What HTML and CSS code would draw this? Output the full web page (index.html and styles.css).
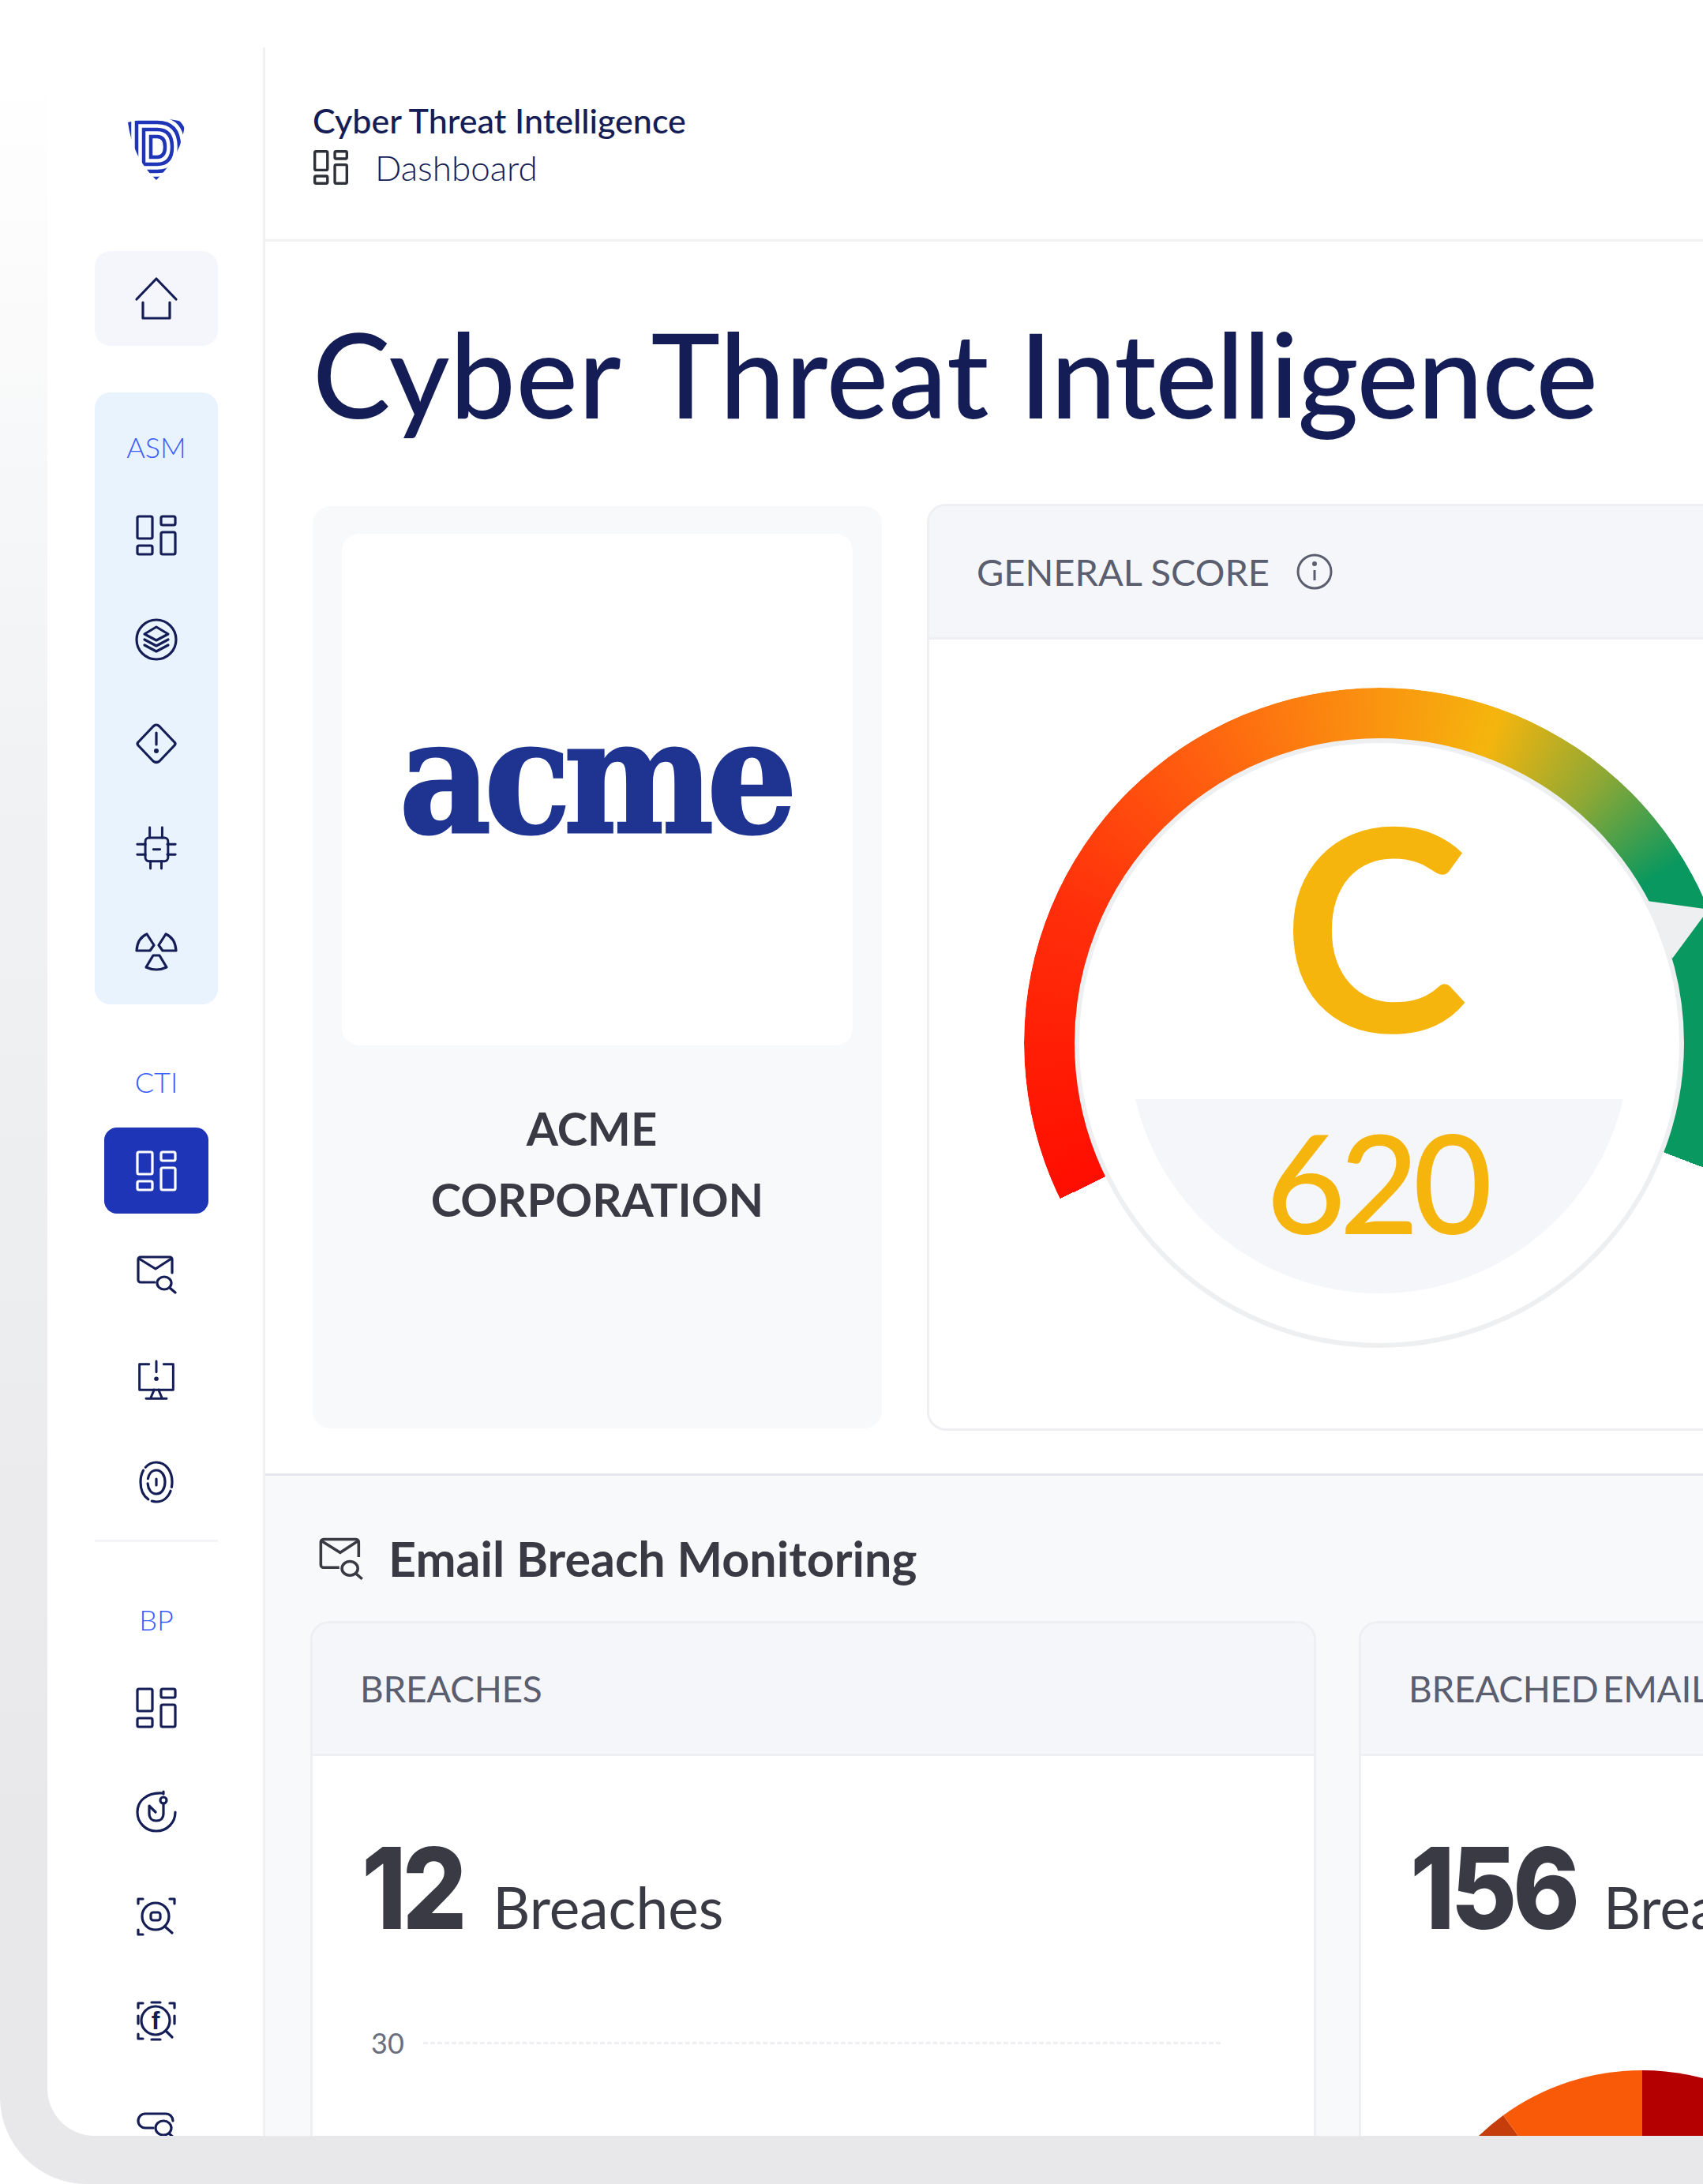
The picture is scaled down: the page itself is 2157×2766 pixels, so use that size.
FILE: index.html
```html
<!DOCTYPE html>
<html lang="en">
<head>
  <meta charset="UTF-8">
  <title>Cyber Threat Intelligence</title>
  <link rel="stylesheet" href="styles.css">
</head>
<body>
  <svg class="sprite" width="0" height="0">
    <symbol id="i-dash" viewBox="0 0 52 52">
      <rect x="2" y="2" width="19" height="28" rx="2"/>
      <rect x="2" y="39" width="19" height="11" rx="2"/>
      <rect x="32" y="2" width="18" height="11" rx="2"/>
      <rect x="32" y="22" width="18" height="28" rx="2"/>
    </symbol>
    <symbol id="i-mail" viewBox="0 0 52 52">
      <path d="M24 37H6a3 3 0 0 1-3-3V8a3 3 0 0 1 3-3h37a3 3 0 0 1 3 3v17"/>
      <path d="M4 7l21 13L45 7"/>
      <ellipse cx="36" cy="38" rx="9" ry="8"/>
      <path d="M43 44l7 6"/>
    </symbol>
  </svg>

  <div class="device">
    <div class="screen">
      <aside class="sidebar">
        <div class="logo">
          <svg width="72" height="78" viewBox="0 0 72 78">
            <defs>
              <clipPath id="shield"><path d="M0 5Q36-5 72 5Q70 44 36 78Q6 50 0 5Z"/></clipPath>
            </defs>
            <g clip-path="url(#shield)" fill="none" stroke="#1f35b7" stroke-width="4.5">
              <path d="M29 23H37Q47 23 47 36Q47 49 37 49H29Z"/>
              <path d="M20 14H37Q56 14 56 36Q56 58 37 58H20Z"/>
              <path d="M11 5H37Q65 5 65 36Q65 67 37 67H11Z"/>
              <path d="M2-4H37Q74-4 74 36Q74 76 37 76H2Z"/>
            </g>
          </svg>
        </div>

        <a class="nav-home">
          <svg class="ico" viewBox="0 0 52 52"><path d="M1 27L26 1l25 26"/><path d="M9 31v20h34V31"/></svg>
        </a>

        <div class="nav-group nav-group-asm">
          <div class="nav-label">ASM</div>
          <a class="nav-item"><svg class="ico"><use href="#i-dash"/></svg></a>
          <a class="nav-item"><svg class="ico" viewBox="0 0 52 52"><ellipse cx="26" cy="26" rx="25" ry="25"/><path d="M11 19l15-9 15 9-15 8z"/><path d="M11 26l15 8 15-8"/><path d="M11 33l15 8 15-8"/></svg></a>
          <a class="nav-item"><svg class="ico" viewBox="0 0 52 52"><path d="M26 2q2 0 4 2l19 20q2 2 0 4L30 48q-4 3-8 0L3 28q-2-2 0-4L22 4q2-2 4-2z"/><path d="M26 12v15"/><circle class="dot" cx="26" cy="35" r="3"/></svg></a>
          <a class="nav-item"><svg class="ico" viewBox="0 0 52 56"><rect x="11" y="14" width="31" height="32" rx="5"/><path d="M17 0v14M34 0v14M18 46v10M33 46v10M0 23h11M0 37h11M41 23h11M41 37h11M22 30h9"/></svg></a>
          <a class="nav-item"><svg class="ico" viewBox="0 0 52 48"><path d="M1 22Q2 6 14 1l9 14-5 7z"/><path d="M51 22Q50 6 38 1l-9 14 5 7z"/><path d="M13 43l9-15h8l9 15q-13 6-26 0z"/></svg></a>
        </div>

        <div class="nav-group nav-group-cti">
          <div class="nav-label">CTI</div>
          <a class="nav-item nav-item-active"><svg class="ico"><use href="#i-dash"/></svg></a>
          <a class="nav-item"><svg class="ico"><use href="#i-mail"/></svg></a>
          <a class="nav-item nav-item-low"><svg class="ico" viewBox="0 0 52 56"><path d="M16 5H3v35h46V5H36"/><path d="M26 1v15"/><circle class="dot" cx="26" cy="25" r="3"/><path d="M23 40l-5 12M29 40l5 12M12 52h28"/></svg></a>
          <a class="nav-item"><svg class="ico" viewBox="0 0 52 52"><path class="dash-ring" d="M26 1C38 1 46 12 46 26S38 51 26 51 6 40 6 26 14 1 26 1z"/><path class="dash-inner" d="M26 11c7 0 11 7 11 15s-4 15-11 15-11-7-11-15 4-15 11-15z"/><path d="M26 22v8"/></svg></a>
        </div>

        <div class="nav-rule"></div>

        <div class="nav-group">
          <div class="nav-label">BP</div>
          <a class="nav-item"><svg class="ico"><use href="#i-dash"/></svg></a>
          <a class="nav-item"><svg class="ico" viewBox="0 0 52 52"><path d="M33 2C14 1 2 12 2 26s11 24 24 24 24-10 24-24"/><path d="M35 0v3"/><circle cx="35" cy="11" r="4"/><path d="M35 15v13c0 6-4 9-9 9s-9-3-9-9V18l8 8"/></svg></a>
          <a class="nav-item"><svg class="ico" viewBox="0 0 52 52"><path d="M3 10V4h6M43 4h6v6M3 43v6h6"/><ellipse cx="25" cy="26" rx="17" ry="17"/><rect x="19" y="21" width="12" height="10" rx="3"/><path d="M37 39l9 8"/></svg></a>
          <a class="nav-item"><svg class="ico" viewBox="0 0 52 52"><path d="M3 10V4h6M43 4h6v6M3 43v6h6M20 3h11M20 50h11M3 20v10M49 20v10"/><ellipse cx="25" cy="26" rx="18" ry="18"/><text class="ico-f" x="25" y="37" text-anchor="middle">f</text><path d="M38 39l8 8"/></svg></a>
          <a class="nav-item"><svg class="ico" viewBox="0 0 52 52"><path d="M22 30H12a9 9 0 0 1 0-18h26a9 9 0 0 1 9 9"/><ellipse cx="35" cy="30" rx="10" ry="9"/><path d="M42 37l8 7"/></svg></a>
        </div>
      </aside>

      <main class="main">
        <header class="topbar">
          <div class="crumb-title">Cyber Threat Intelligence</div>
          <div class="crumb-sub">
            <svg class="crumb-ico"><use href="#i-dash"/></svg>
            <span>Dashboard</span>
          </div>
        </header>

        <section class="overview">
          <h1 class="page-title">Cyber Threat <span class="tight">Intelligence</span></h1>
          <div class="overview-row">
            <div class="company">
              <div class="company-logo"><span class="acme">acme</span></div>
              <div class="company-name">ACME&nbsp;<br>CORPORATION</div>
            </div>
            <div class="panel score">
              <div class="panel-head">
                <span>GENERAL SCORE</span>
                <svg class="info" viewBox="0 0 46 46"><circle cx="23" cy="23" r="21"/><path d="M23 21v13"/><circle class="info-dot" cx="23" cy="13" r="3"/></svg>
              </div>
              <div class="score-body">
                <div class="gauge">
                  <div class="gauge-ring"></div>
                  <svg class="gauge-needle" width="900" height="900" viewBox="0 0 900 900"><path d="M789 270L861 280V289L821 343Q805 305 789 270Z"/></svg>
                  <div class="gauge-face">
                    <div class="gauge-well"></div>
                    <div class="grade">C</div>
                    <div class="points">620</div>
                  </div>
                </div>
              </div>
            </div>
          </div>
        </section>

        <section class="breach">
          <h2 class="breach-title">
            <svg class="breach-ico"><use href="#i-mail"/></svg>
            Email Breach Monitoring
          </h2>
          <div class="breach-row">
            <div class="panel stat">
              <div class="panel-head">BREACHES</div>
              <div class="stat-body">
                <div class="stat-value"><b>12</b><span>Breaches</span></div>
                <div class="axis-row"><span>30</span><i></i></div>
              </div>
            </div>
            <div class="panel stat">
              <div class="panel-head">BREACHED EMAILS</div>
              <div class="stat-body">
                <div class="stat-value stat-value-wide"><b>156</b><span>Breached Emails</span></div>
                <svg class="pie" width="300" height="100" viewBox="0 0 300 100">
                  <path fill="#c43d0a" d="M299 299L123 57A299 299 0 0 0 0 299Z"/>
                  <path fill="#f95a07" d="M299 299V0A299 299 0 0 0 123 57Z"/>
                  <path fill="#b50000" d="M299 299V0A299 299 0 0 1 598 299Z"/>
                </svg>
              </div>
            </div>
          </div>
        </section>
      </main>
    </div>
  </div>
</body>
</html>
```

FILE: styles.css
```css
* {
  box-sizing: border-box;
}
html, body {
  margin: 0;
  padding: 0;
  width: 2157px;
  height: 2766px;
  overflow: hidden;
  background: #fff;
  font-family: "Lato", "Liberation Sans", sans-serif;
  color: #141d55;
}
.sprite {
  position: absolute;
}

/* outer device frame */
.device {
  width: 2157px;
  height: 2766px;
  padding: 60px 0 61px 60px;
  border-bottom-left-radius: 110px;
  background: linear-gradient(180deg, #fff 3%, #f1f2f4 35%, #e8e8ea 85%);
  overflow: hidden;
}
.screen {
  display: flex;
  height: 100%;
  background: #fff;
  border-bottom-left-radius: 60px;
  overflow: hidden;
}

/* sidebar */
.sidebar {
  flex: none;
  width: 276px;
  border-right: 3px solid #f0f1f3;
  padding: 90px 0 0 60px;
}
.logo {
  width: 156px;
  height: 78px;
  display: flex;
  justify-content: center;
}
.nav-home {
  display: flex;
  align-items: center;
  justify-content: center;
  width: 156px;
  height: 120px;
  margin-top: 90px;
  border-radius: 20px;
  background: #f5f6fb;
}
.ico {
  width: 52px;
  height: 52px;
  fill: none;
  stroke: #141d55;
  stroke-width: 3.2;
  stroke-linecap: round;
  stroke-linejoin: round;
  overflow: visible;
}
.ico .dot {
  fill: #141d55;
  stroke: none;
}
.ico-f {
  font-family: "Liberation Sans", sans-serif;
  font-size: 32px;
  font-weight: 700;
  fill: #141d55;
  stroke: none;
}
.dash-ring {
  stroke-dasharray: 42 5 30 5 40 5;
}
.dash-inner {
  stroke-dasharray: 60 6;
}
.nav-group {
  width: 156px;
}
.nav-group-asm {
  margin-top: 59px;
  padding-top: 45px;
  border-radius: 20px;
  background: #e8f3fe;
}
.nav-group-cti {
  margin-top: 74px;
}
.nav-label {
  height: 48px;
  margin-bottom: 22px;
  line-height: 48px;
  text-align: center;
  font-size: 36px;
  font-weight: 300;
  color: #3a5bff;
}
.nav-group-cti .nav-label {
  margin-bottom: 34px;
}
.nav-item {
  display: flex;
  align-items: center;
  justify-content: center;
  height: 132px;
}
.nav-item-active {
  width: 132px;
  height: 109px;
  margin: 0 0 10px 12px;
  border-radius: 16px;
  background: #1f35b7;
}
.nav-item-active .ico {
  stroke: #fff;
}
.nav-item-low {
  padding-top: 8px;
}
.nav-rule {
  width: 156px;
  height: 3px;
  margin: 7px 0 74px;
  background: #f3f4f8;
}

/* main column */
.main {
  flex: none;
  width: 1821px;
  overflow: hidden;
}
.topbar {
  height: 246px;
  padding: 66px 0 0 60px;
  border-bottom: 3px solid #f0f1f3;
}
.crumb-title {
  height: 54px;
  line-height: 54px;
  font-size: 43px;
  font-weight: 500;
}
.crumb-sub {
  display: flex;
  align-items: center;
  gap: 34px;
  height: 60px;
  margin-top: 2px;
  font-size: 44px;
  font-weight: 300;
}
.crumb-ico {
  width: 44px;
  height: 44px;
  margin-left: 1px;
  fill: none;
  stroke: #2e3038;
  stroke-width: 4;
}
.overview {
  height: 1560px;
  padding: 0 0 0 60px;
}
.page-title {
  margin: 0;
  height: 332px;
  padding-top: 77px;
  line-height: 180px;
  font-size: 148px;
  font-weight: 500;
  word-spacing: 7px;
  letter-spacing: 0.5px;
}
.tight {
  margin-left: -7px;
  letter-spacing: -1.2px;
}
.overview-row {
  display: flex;
  align-items: flex-start;
  gap: 57px;
}
.company {
  flex: none;
  width: 721px;
  height: 1168px;
  margin-top: 3px;
  padding: 35px 37px 0;
  border-radius: 22px;
  background: #f8f9fb;
}
.company-logo {
  display: flex;
  align-items: center;
  justify-content: center;
  height: 648px;
  padding: 0 6px 34px 0;
  border-radius: 22px;
  background: #fff;
}
.acme {
  font-family: "DejaVu Serif", serif;
  font-size: 200px;
  font-weight: 700;
  letter-spacing: -10px;
  color: #1f3491;
  -webkit-text-stroke: 3px #1f3491;
  transform: scaleX(0.9);
}
.company-name {
  margin-top: 60px;
  text-align: center;
  font-size: 58px;
  line-height: 90px;
  font-weight: 700;
  color: #3a3a45;
}
.panel {
  border: 3px solid #eeeff2;
  border-radius: 24px;
  background: #fff;
  overflow: hidden;
}
.panel-head {
  display: flex;
  align-items: center;
  gap: 34px;
  padding-left: 60px;
  background: #f5f6fa;
  border-bottom: 3px solid #eeeff2;
  font-size: 46px;
  color: #5a5e6e;
}
.score {
  flex: none;
  width: 1100px;
  height: 1174px;
}
.score .panel-head {
  height: 169px;
  font-size: 47px;
}
.info {
  width: 46px;
  height: 46px;
  fill: none;
  stroke: #5a5e6e;
  stroke-width: 3;
}
.info-dot {
  fill: #5a5e6e;
  stroke: none;
}
.score-body {
  padding: 61px 0 0 120px;
}
.gauge {
  position: relative;
  width: 900px;
  height: 900px;
}
.gauge-ring {
  position: absolute;
  inset: 0;
  border-radius: 50%;
  background: conic-gradient(
    from 244deg,
    #ff0d00 0deg,
    #ff2f0a 50deg,
    #ff5a0f 80deg,
    #fb8e10 112deg,
    #f5b50d 136deg,
    #8ea835 156deg,
    #09985f 175deg,
    #09985f 227deg,
    transparent 227deg
  );
  -webkit-mask: radial-gradient(closest-side, transparent 384px, #000 385px);
  mask: radial-gradient(closest-side, transparent 384px, #000 385px);
}
.gauge-needle {
  position: absolute;
  left: 0;
  top: 0;
  fill: #eeeff1;
}
.gauge-face {
  position: absolute;
  left: 64px;
  top: 64px;
  display: flex;
  flex-direction: column;
  align-items: center;
  width: 772px;
  height: 772px;
  border: 6px solid #eeeff1;
  border-radius: 50%;
  background: #fff;
}
.gauge-well {
  position: absolute;
  left: 63px;
  top: 63px;
  width: 634px;
  height: 634px;
  border-radius: 50%;
  background: #f5f6fa;
  clip-path: inset(388px 0 0 0);
}
.grade {
  position: relative;
  height: 420px;
  margin: 19px 10px 0 0;
  line-height: 420px;
  font-size: 356px;
  font-weight: 700;
  color: #f5b50d;
}
.points {
  position: relative;
  height: 180px;
  margin: 26px 8px 0 0;
  line-height: 180px;
  font-size: 174px;
  font-weight: 500;
  letter-spacing: -8px;
  color: #f5b50d;
}

/* breach section */
.breach {
  height: 900px;
  padding: 0 0 0 57px;
  border-top: 3px solid #e6e7ea;
  background: #f8f9fb;
}
.breach-title {
  display: flex;
  align-items: center;
  gap: 30px;
  margin: 0;
  height: 184px;
  padding: 24px 0 0 9px;
  font-size: 61px;
  font-weight: 700;
  color: #3a3a45;
}
.breach-ico {
  width: 60px;
  height: 58px;
  fill: none;
  stroke: #3a3a45;
  stroke-width: 3.2;
  overflow: visible;
}
.breach-row {
  display: flex;
  gap: 54px;
}
.stat {
  flex: none;
  width: 1274px;
  height: 900px;
}
.stat .panel-head {
  height: 168px;
  letter-spacing: -0.3px;
  word-spacing: -6px;
}
.stat-body {
  padding: 47px 0 0 62px;
}
.stat-value {
  display: flex;
  align-items: baseline;
  gap: 24px;
  height: 240px;
  line-height: 240px;
  color: #3a3a45;
}
.stat-value-wide {
  gap: 12px;
}
.stat-value b {
  font-family: "Inter", "Lato", sans-serif;
  font-size: 143px;
  font-weight: 800;
  letter-spacing: -6px;
  transform: scaleX(0.9);
  transform-origin: left;
}
.stat-value span {
  font-size: 73px;
  white-space: nowrap;
}
.axis-row {
  display: flex;
  align-items: center;
  gap: 24px;
  margin-top: 54px;
  padding-left: 12px;
  font-size: 36px;
  color: #6b6e7c;
}
.axis-row i {
  width: 1010px;
  border-top: 3px dashed #eeeff2;
}
.pie {
  display: block;
  margin: 111px 0 0 -5px;
  overflow: visible;
}
```
